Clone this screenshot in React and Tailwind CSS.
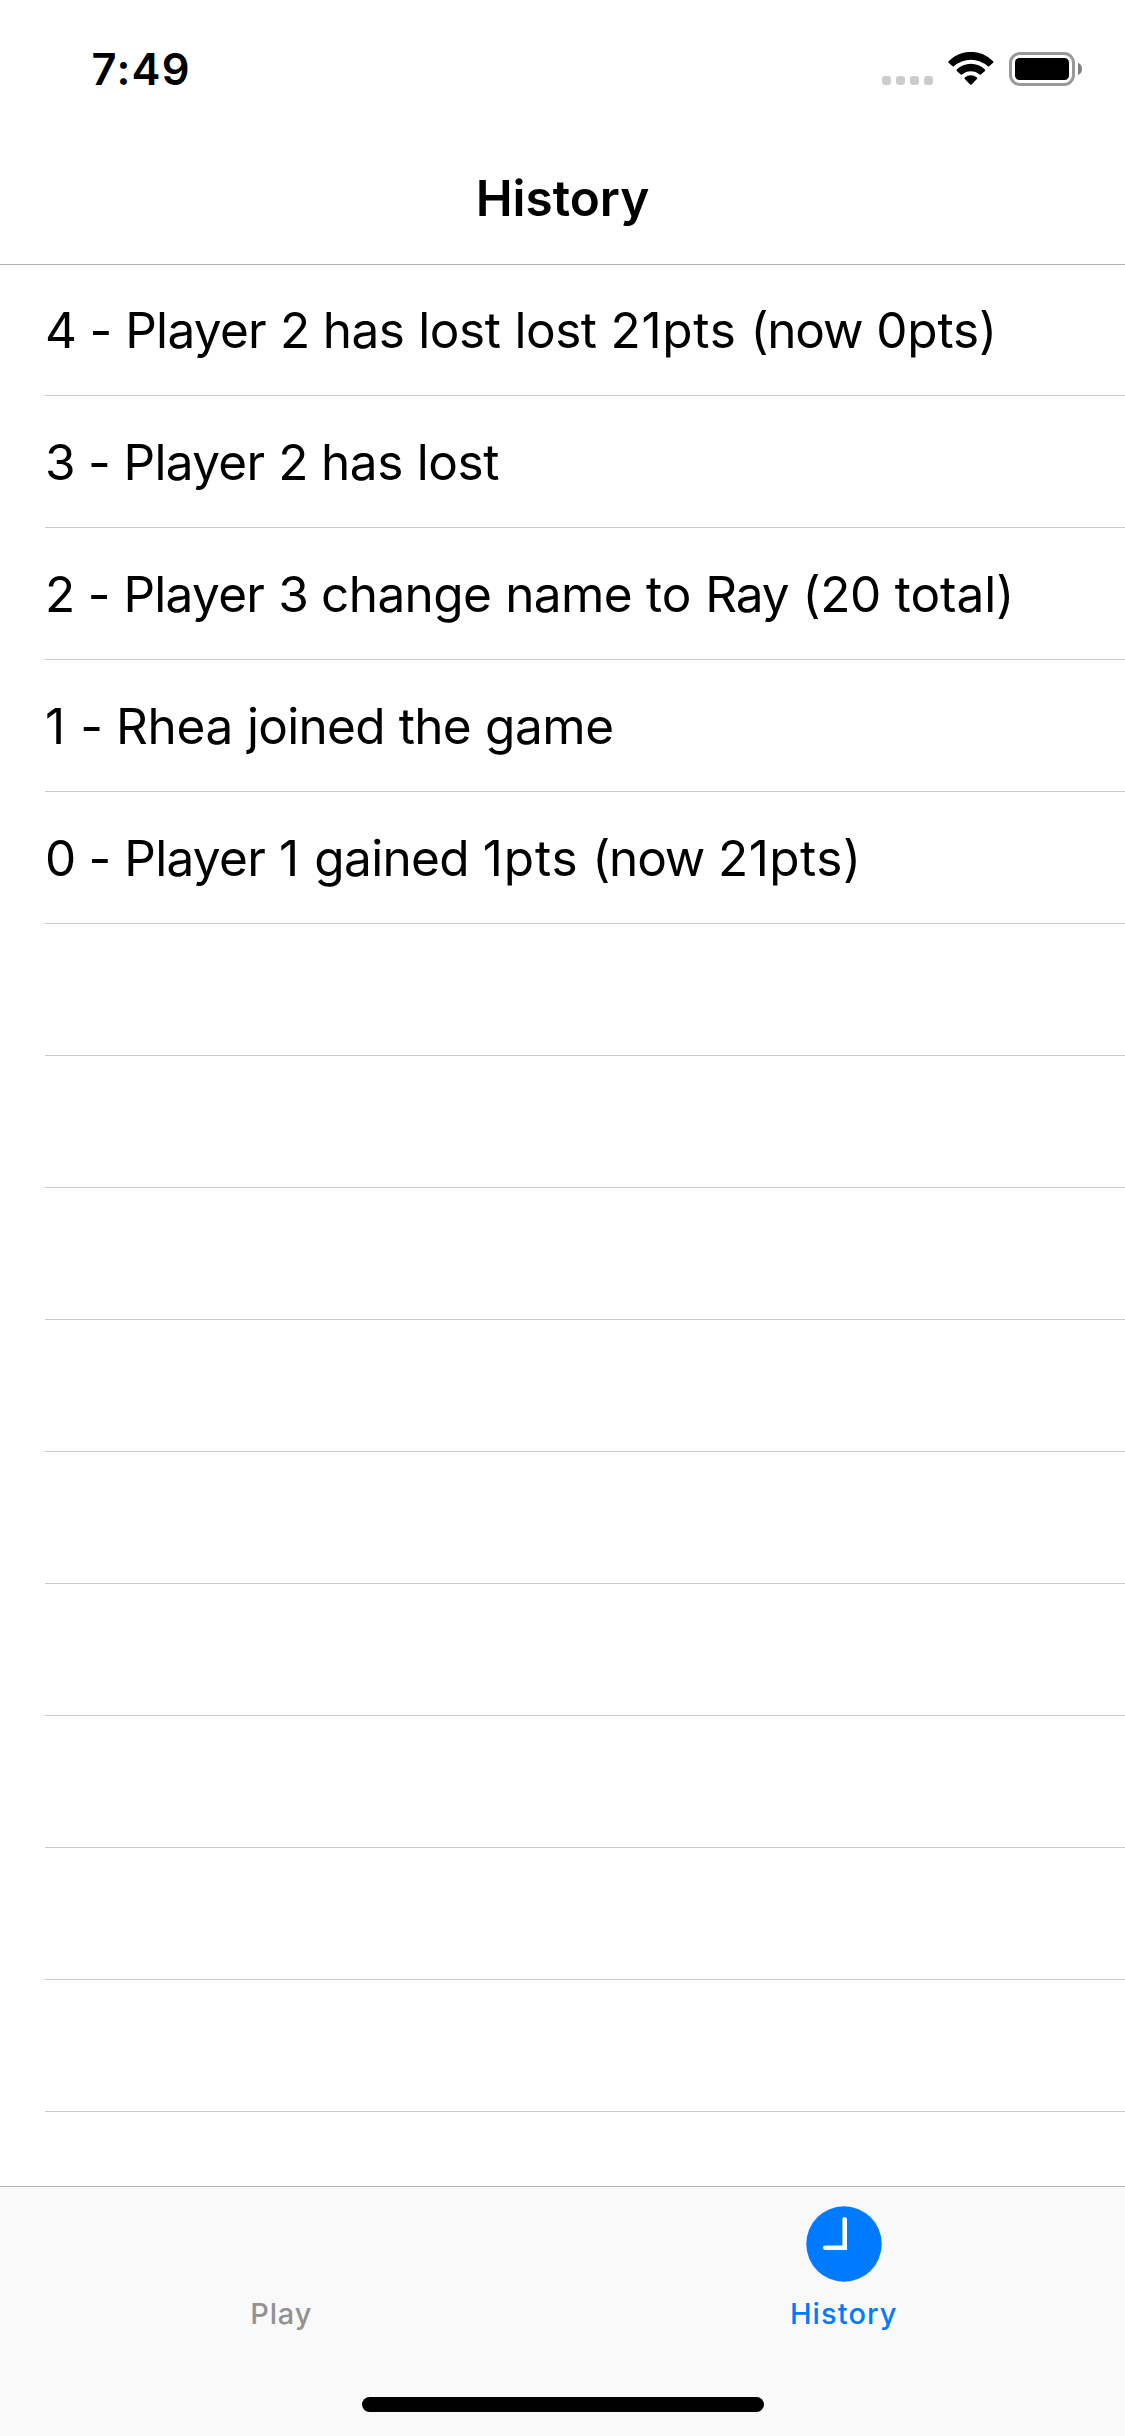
import React from "react";

const TRACKING = {
  "0": "tracking-[-1.6px]",
  "2": "tracking-[-1.4px]",
  "3": "tracking-[-1.6px]",
  "4": "tracking-[-1.4px]",
  "1": "tracking-[1.2px]",
  "-": "tracking-[-1px]",
  Player: "tracking-[-0.7px]",
  has: "tracking-[-0.5px]",
  lost: "tracking-[-0.45px]",
  "21pts": "tracking-[0.7px]",
  "21pts)": "tracking-[0.5px]",
  "1pts": "tracking-[0.8px]",
  "(now": "tracking-[-1.2px]",
  "0pts)": "tracking-[-0.15px]",
  change: "tracking-[-0.6px]",
  name: "tracking-[-0.6px]",
  to: "tracking-[0px]",
  Ray: "tracking-[-1.1px]",
  "(20": "tracking-[-0.4px]",
  "total)": "tracking-[0px]",
  Rhea: "tracking-[-0.3px]",
  joined: "tracking-[-0.7px]",
  the: "tracking-[-0.7px]",
  game: "tracking-[-0.4px]",
};

const EVENTS = [
  "4 - Player 2 has lost lost 21pts (now 0pts)",
  "3 - Player 2 has lost",
  "2 - Player 3 change name to Ray (20 total)",
  "1 - Rhea joined the game",
  "0 - Player 1 gained 1pts (now 21pts)",
];

const EMPTY_ROWS = 9;

function StatusBar() {
  return (
    <div className="flex h-[132px] items-start justify-between pl-[91.5px] pr-[43px]">
      <div className="mt-[42px] text-[43.5px] font-semibold leading-[54px] tracking-[1.3px]">7:49</div>
      <div className="mt-[52px] flex h-[34px] items-start">
        <div className="mt-6 flex gap-[5px]">
          {[0, 1, 2, 3].map((i) => (
            <span key={i} className="size-[9px] rounded-[3px] bg-[#cccccc]" />
          ))}
        </div>
        <svg className="ml-[15px] h-[33px] w-[46px]" viewBox="0 0 46 33" fill="#000">
          <path d="M.6 9.3A31 31 0 0 1 45.1 9.3Q45.8 10 45.1 10.7L41.1 14.3Q40.5 14.8 39.9 14.3A25.5 25.5 0 0 0 5.8 14.3Q5.2 14.8 4.6 14.3L.6 10.7Q-.1 10 .6 9.3Z" />
          <path d="M8.8 17.5A20 20 0 0 1 36.9 17.5Q37.6 18.2 36.9 18.9L32.9 22.5Q32.3 23 31.7 22.5A13.4 13.4 0 0 0 14 22.5Q13.4 23 12.8 22.5L8.8 18.9Q8.1 18.2 8.8 17.5Z" />
          <path d="M16.8 25.6A9.3 9.3 0 0 1 28.9 25.6Q29.6 26.3 28.9 27L23.6 32.4Q22.85 33.1 22.1 32.4L16.8 27Q16.1 26.3 16.8 25.6Z" />
        </svg>
        <svg className="ml-[15px] h-[34px] w-[73px]" viewBox="0 0 73 34">
          <rect x="1.5" y="1.5" width="63" height="31" rx="9.5" fill="none" stroke="#999" strokeWidth="3" />
          <rect x="6" y="6" width="54" height="22" rx="4.5" fill="#000" />
          <path d="M69 10.8C71.6 12 73 14.2 73 17C73 19.8 71.6 22 69 23.2Z" fill="#808080" />
        </svg>
      </div>
    </div>
  );
}

function EventText({ text }) {
  return (
    <p className="whitespace-pre">
      {text.split(" ").map((word, i) => (
        <React.Fragment key={i}>
          {i > 0 && " "}
          <span className={TRACKING[word] ?? "tracking-[-0.65px]"}>{word}</span>
        </React.Fragment>
      ))}
    </p>
  );
}

function Tab({ label, className, children }) {
  return (
    <div className={`flex flex-1 flex-col items-center pt-[19px] ${className}`}>
      <div className="size-[76px]">{children}</div>
      <div className="mt-[14px] text-[29px] font-medium leading-9">{label}</div>
    </div>
  );
}

export default function App() {
  return (
    <div className="flex h-[2436px] w-[1125px] flex-col overflow-hidden bg-white font-['Inter',sans-serif] text-black">
      <header className="h-[265px] shrink-0 border-b border-[#b2b2b2]">
        <StatusBar />
        <h1 className="pt-[36px] text-center text-[49.5px] font-semibold leading-[60px]">History</h1>
      </header>

      <main className="min-h-0 flex-1 overflow-hidden pl-[45px] text-[49.5px] leading-[60px]">
        {EVENTS.map((text, i) => (
          <div
            key={text}
            className={`flex items-center border-b border-[#c8c8c8] ${i === 0 ? "h-[131px]" : "h-[132px]"}`}
          >
            <EventText text={text} />
          </div>
        ))}
        {Array.from({ length: EMPTY_ROWS }, (_, i) => (
          <div key={i} className="h-[132px] border-b border-[#c8c8c8]" />
        ))}
      </main>

      <nav className="flex h-[250px] shrink-0 flex-col border-t border-[#b2b2b2] bg-[#f9f9f9]">
        <div className="flex h-[210px]">
          <Tab label="Play" className="tracking-[0.8px] text-[#929292]" />
          <Tab label="History" className="tracking-[1.1px] text-[#007aff]">
            <svg viewBox="0 0 76 76" className="size-full">
              <circle cx="38" cy="38" r="37.7" fill="#007aff" />
              <path d="M38.7 13.3V41.7H19.3" fill="none" stroke="#f9f9f9" strokeWidth="4.6" strokeLinecap="round" />
            </svg>
          </Tab>
        </div>
        <div className="mx-auto h-[15px] w-[402px] rounded-full bg-black" />
      </nav>
    </div>
  );
}
